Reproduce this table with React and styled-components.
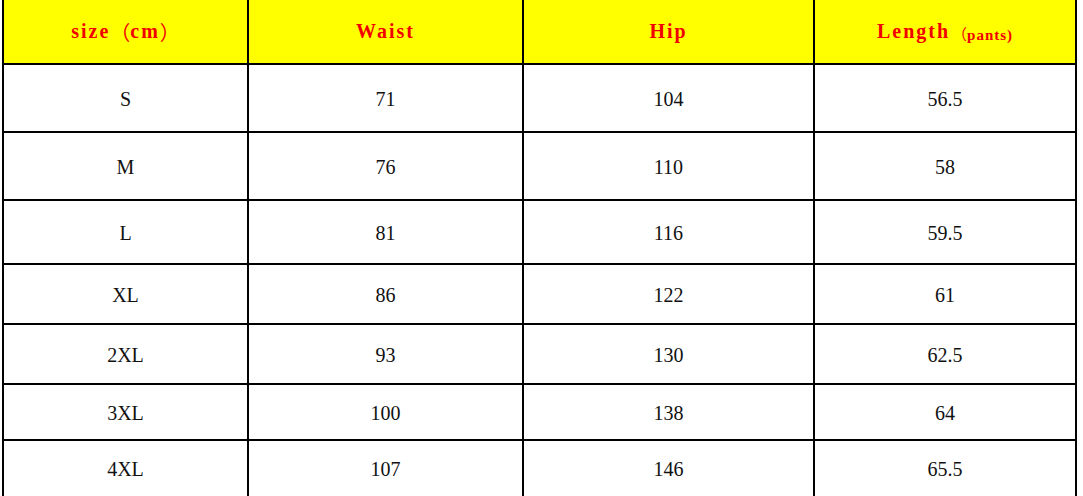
import React from "react";
import styled, { createGlobalStyle } from "styled-components";

const Global = createGlobalStyle`
  html, body { margin: 0; padding: 0; background: #fff; overflow: hidden; }
  #root { width: 1083px; height: 496px; }
`;

const Table = styled.div`
  margin-left: 2px;
  width: 1075px;
  box-sizing: border-box;
  padding: 0 2px;
  background: #000;
  display: grid;
  grid-template-columns: 243px 273px 289px 260px;
  grid-template-rows: 63px 66px 66px 62px 58px 58px 54px 55px;
  gap: 2px;
`;

const Cell = styled.div`
  display: flex;
  align-items: center;
  justify-content: center;
  background: ${(p) => (p.$head ? "#ffff00" : "#ffffff")};
  color: ${(p) => (p.$head ? "#f20000" : "#111111")};
  font-family: "Liberation Serif", "Noto Sans CJK SC", serif;
  font-weight: ${(p) => (p.$head ? 700 : 400)};
  font-size: 20px;
  letter-spacing: ${(p) => (p.$head ? "2px" : "0")};
  white-space: pre;
  padding-top: ${(p) => (p.$head ? "0" : "2px")};
`;

const Wide = styled.span`
  font-family: "Noto Sans CJK SC", sans-serif;
  font-weight: 400;
  letter-spacing: 0;
`;

const Small = styled.span`
  font-size: 15px;
  letter-spacing: 1px;
  margin-left: 2px;
  padding-top: 3px;
`;

const rows = [
  ["S", "71", "104", "56.5"],
  ["M", "76", "110", "58"],
  ["L", "81", "116", "59.5"],
  ["XL", "86", "122", "61"],
  ["2XL", "93", "130", "62.5"],
  ["3XL", "100", "138", "64"],
  ["4XL", "107", "146", "65.5"],
];

export default function App() {
  return (
    <>
      <Global />
      <Table>
        <Cell $head>
          size<Wide>（</Wide>cm<Wide>）</Wide>
        </Cell>
        <Cell $head>Waist</Cell>
        <Cell $head>Hip</Cell>
        <Cell $head>
          Length
          <Small>
            <Wide>（</Wide>pants)
          </Small>
        </Cell>
        {rows.map((r) =>
          r.map((v, i) => <Cell key={r[0] + i}>{v}</Cell>)
        )}
      </Table>
    </>
  );
}
